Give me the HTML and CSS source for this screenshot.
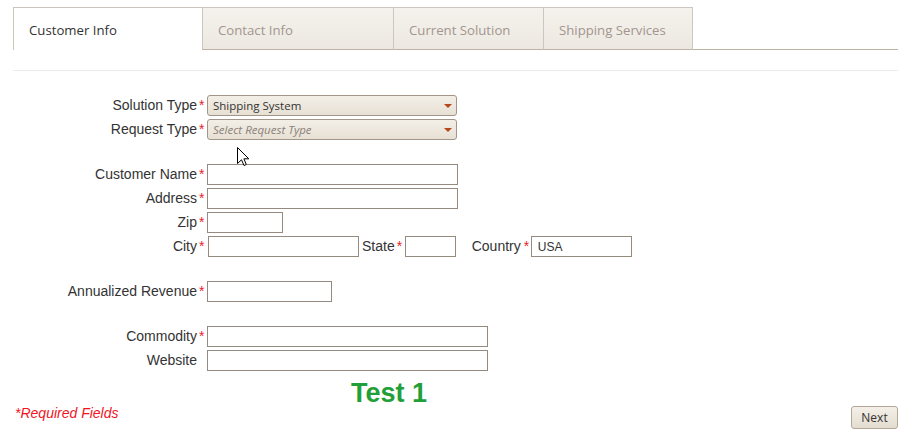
FILE: index.html
```html
<!DOCTYPE html>
<html>
<head>
<meta charset="utf-8">
<link rel="stylesheet" href="styles.css">
</head>
<body>
<div class="page">
  <div class="tabs">
    <div class="tab tab-active tab-wide">Customer Info</div>
    <div class="tab tab-wide">Contact Info</div>
    <div class="tab">Current Solution</div>
    <div class="tab tab-last">Shipping Services</div>
    <div class="tabs-fill"></div>
  </div>
  <div class="divider"></div>

  <form class="form">
    <div class="group">
      <div class="row">
        <span class="lbl">Solution Type</span><span class="req">*</span>
        <div class="select"><span class="select-text">Shipping System</span><span class="arrow"></span></div>
      </div>
      <div class="row">
        <span class="lbl">Request Type</span><span class="req">*</span>
        <div class="select"><span class="select-text placeholder">Select Request Type</span><span class="arrow"></span></div>
      </div>
    </div>

    <div class="group">
      <div class="row">
        <span class="lbl">Customer Name</span><span class="req">*</span>
        <input class="field w-name" type="text">
      </div>
      <div class="row">
        <span class="lbl">Address</span><span class="req">*</span>
        <input class="field w-name" type="text">
      </div>
      <div class="row">
        <span class="lbl">Zip</span><span class="req">*</span>
        <input class="field w-zip" type="text">
      </div>
      <div class="row">
        <span class="lbl">City</span><span class="req">*</span>
        <div class="inline">
          <input class="field w-city" type="text">
          <span class="ilbl ilbl-state">State</span><span class="ireq">*</span>
          <input class="field w-state" type="text">
          <span class="ilbl ilbl-country">Country</span><span class="ireq ireq-country">*</span>
          <input class="field w-country" type="text" value="USA">
        </div>
      </div>
    </div>

    <div class="group">
      <div class="row">
        <span class="lbl">Annualized Revenue</span><span class="req">*</span>
        <input class="field w-rev" type="text">
      </div>
    </div>

    <div class="group">
      <div class="row">
        <span class="lbl">Commodity</span><span class="req">*</span>
        <input class="field w-wide" type="text">
      </div>
      <div class="row">
        <span class="lbl">Website</span><span class="req"></span>
        <input class="field w-wide" type="text">
      </div>
    </div>
  </form>

  <div class="test">Test 1</div>

  <div class="footer">
    <span class="required">*Required Fields</span>
    <button class="next" type="button">Next</button>
  </div>

  <svg class="cursor" width="13" height="20" viewBox="0 0 13 20">
    <path d="M0.5 0.5 L0.5 16.5 L4.5 12.8 L7 18.5 L9.3 17.5 L6.9 11.8 L11.8 11.8 Z" fill="#fff" stroke="#000" stroke-width="1" stroke-linejoin="miter"/>
  </svg>
</div>
</body>
</html>
```
FILE: styles.css
```css
* { box-sizing: border-box; }

body {
  margin: 0;
  background: #fff;
  font-family: "Liberation Sans", Arial, sans-serif;
  color: #333;
}

.page {
  position: relative;
  padding: 7px 12px 0 13px;
  width: 910px;
  height: 432px;
  overflow: hidden;
}

/* Tabs */
.tabs {
  display: flex;
  height: 43px;
}

.tab {
  width: 150px;
  height: 43px;
  padding: 13px 0 0 15px;
  font-family: "Open Sans", "Noto Sans", sans-serif;
  font-size: 13.2px;
  color: #a3958f;
  background: linear-gradient(#f5f2ed, #ece8e1);
  border-top: 1px solid #cdc6bd;
  border-left: 1px solid #cdc6bd;
  border-bottom: 1px solid #bdb2a6;
}

.tab-wide { width: 190px; }
.tab-wide + .tab-wide { width: 191px; }

.tab-last { border-right: 1px solid #cdc6bd; }

.tab-active {
  width: 189px;
  color: #333;
  background: #fff;
  border-top: 1px solid #cbc4bb;
  border-left: 1px solid #cbc4bb;
  border-bottom: none;
}

.tabs-fill {
  flex: 1;
  border-bottom: 1px solid #bdb2a6;
}

.divider {
  margin-top: 20px;
  height: 1px;
  background: #ececec;
}

/* Form */
.form {
  padding-top: 22px;
  display: flex;
  flex-direction: column;
  gap: 21px;
}

.group { display: flex; flex-direction: column; }

.row {
  display: flex;
  align-items: center;
  height: 24px;
}

.lbl {
  width: 184px;
  text-align: right;
  font-size: 14px;
  color: #333;
}

.req {
  width: 10px;
  padding-left: 2px;
  color: #e8202a;
  font-size: 14px;
}

.select {
  position: relative;
  width: 250px;
  height: 21px;
  border: 1px solid #a2958a;
  border-radius: 3px;
  background: linear-gradient(#f3efe7, #e7e0d4);
  display: flex;
  align-items: center;
  padding-left: 5px;
}

.select-text {
  font-family: "Open Sans", "Noto Sans", sans-serif;
  font-size: 11.5px;
  color: #333;
}

.select-text.placeholder {
  font-style: italic;
  color: #8a817a;
}

.arrow {
  position: absolute;
  right: 4px;
  top: 8px;
  width: 0;
  height: 0;
  border-left: 4px solid transparent;
  border-right: 4px solid transparent;
  border-top: 4px solid #b8461c;
}

.field {
  height: 21px;
  border: 1px solid #948a80;
  margin: 0;
  padding: 0 6px;
  font-family: "Liberation Sans", Arial, sans-serif;
  font-size: 12px;
  color: #333;
  background: #fff;
  outline: none;
}

.w-name { width: 251px; }
.w-zip { width: 76px; }
.w-rev { width: 125px; }
.w-wide { width: 281px; }
.w-city { width: 151px; margin-left: 1px; }
.w-state { width: 51px; }
.w-country { width: 101px; padding-top: 2px; }

.inline {
  display: flex;
  align-items: center;
}

.ilbl {
  font-size: 14px;
  color: #333;
}

.ilbl-state { margin-left: 3px; }
.ilbl-country { margin-left: 16px; }

.ireq {
  color: #e8202a;
  font-size: 14px;
  padding-left: 2px;
  width: 10px;
}

.ireq-country { padding-left: 3px; width: 10px; }

.test {
  margin-top: 10px;
  margin-left: 338px;
  font-size: 27px;
  line-height: 22px;
  font-weight: bold;
  color: #22a037;
}

.footer {
  margin-top: 2px;
  display: flex;
  justify-content: space-between;
  align-items: flex-start;
}

.required {
  margin-left: 2px;
  margin-top: 2px;
  font-size: 14px;
  line-height: 10px;
  font-style: italic;
  color: #f0141e;
}

.next {
  width: 47px;
  height: 23px;
  padding: 0;
  border: 1px solid #b3a897;
  border-radius: 3px;
  background: linear-gradient(#f4f0e9, #e4dccf);
  font-family: "Open Sans", "Noto Sans", sans-serif;
  font-size: 12px;
  color: #333;
}

.cursor {
  position: absolute;
  left: 237px;
  top: 147px;
}
```
